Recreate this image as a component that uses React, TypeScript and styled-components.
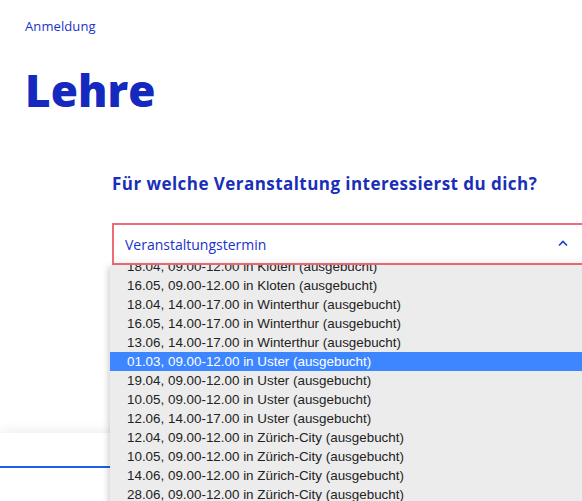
import React from 'react';
import styled, { createGlobalStyle } from 'styled-components';

const options = [
  '18.04, 09.00-12.00 in Kloten (ausgebucht)',
  '16.05, 09.00-12.00 in Kloten (ausgebucht)',
  '18.04, 14.00-17.00 in Winterthur (ausgebucht)',
  '16.05, 14.00-17.00 in Winterthur (ausgebucht)',
  '13.06, 14.00-17.00 in Winterthur (ausgebucht)',
  '01.03, 09.00-12.00 in Uster (ausgebucht)',
  '19.04, 09.00-12.00 in Uster (ausgebucht)',
  '10.05, 09.00-12.00 in Uster (ausgebucht)',
  '12.06, 14.00-17.00 in Uster (ausgebucht)',
  '12.04, 09.00-12.00 in Zürich-City (ausgebucht)',
  '10.05, 09.00-12.00 in Zürich-City (ausgebucht)',
  '14.06, 09.00-12.00 in Zürich-City (ausgebucht)',
  '28.06, 09.00-12.00 in Zürich-City (ausgebucht)',
];

const selectedIndex = 5;

const GlobalStyle = createGlobalStyle`
  html, body {
    margin: 0;
    padding: 0;
    background: #fff;
  }
  body {
    font-family: 'Open Sans', 'Liberation Sans', sans-serif;
  }
`;

const App = () => {
  return (
    <>
      <GlobalStyle />
      <Page>
        <Header>
          <NavLink href='#'>Anmeldung</NavLink>
        </Header>

        <Title>Lehre</Title>

        <Section>
          <Question>Für welche Veranstaltung interessierst du dich?</Question>

          <SelectWrap>
            <SelectBox>
              <SelectLabel>Veranstaltungstermin</SelectLabel>
              <Chevron width='10' height='7' viewBox='0 0 10 7'>
                <path d='M1 5.5 L5 1.5 L9 5.5' fill='none' stroke='#1a3cd0' strokeWidth='1.6' />
              </Chevron>
            </SelectBox>

            <Dropdown>
              <OptionList>
                {options.map((opt, i) => (
                  <Option key={i} $selected={i === selectedIndex}>
                    {opt}
                  </Option>
                ))}
              </OptionList>
            </Dropdown>
          </SelectWrap>
        </Section>

        <BottomBar>
          <ProgressLine />
        </BottomBar>
      </Page>
    </>
  );
};

const Page = styled.div`
  position: relative;
  display: flex;
  flex-direction: column;
  width: 582px;
  height: 501px;
  overflow: hidden;
`;

const Header = styled.div`
  padding: 14px 25px 0;
  height: 16px;
`;

const NavLink = styled.a`
  font-size: 13px;
  line-height: 16px;
  color: #1a33c8;
  text-decoration: none;
  letter-spacing: 0.1px;
`;

const Title = styled.h1`
  margin: 36px 0 0 25px;
  font-size: 44px;
  line-height: 48px;
  font-weight: 800;
  color: #1629bf;
  letter-spacing: 0.1px;
`;

const Section = styled.div`
  position: relative;
  z-index: 2;
  padding-left: 112px;
  margin-top: 59px;
`;

const Question = styled.h2`
  margin: 0;
  font-size: 17px;
  line-height: 22px;
  font-weight: 700;
  color: #1a2fb8;
  letter-spacing: 0.45px;
`;

const SelectWrap = styled.div`
  position: relative;
  margin-top: 28px;
  margin-right: -12px;
`;

const SelectBox = styled.div`
  display: flex;
  align-items: center;
  justify-content: space-between;
  height: 38px;
  padding: 0 24px 0 11px;
  border: 2px solid #ee6b78;
  background: linear-gradient(#fff 80%, #f6f6f6);
`;

const SelectLabel = styled.span`
  font-size: 14px;
  color: #1a33c8;
`;

const Chevron = styled.svg`
  display: block;
  margin-top: -2px;
`;

const Dropdown = styled.div`
  position: absolute;
  top: 100%;
  left: -2px;
  right: 0;
  height: 260px;
  overflow: hidden;
  background: #ececec;
  box-shadow: -2px 2px 6px rgba(0, 0, 0, 0.18);
`;

const OptionList = styled.div`
  display: flex;
  flex-direction: column;
  margin-top: -8px;
`;

const Option = styled.div<{ $selected?: boolean }>`
  height: 19px;
  line-height: 19px;
  padding-left: 17px;
  font-family: 'Liberation Sans', Arial, sans-serif;
  font-size: 13.4px;
  white-space: nowrap;
  color: ${p => (p.$selected ? '#fff' : '#222')};
  background: ${p => (p.$selected ? '#3d86ff' : 'transparent')};
`;

const BottomBar = styled.div`
  margin-top: auto;
  height: 68px;
  padding-top: 33px;
  box-sizing: border-box;
  background: #fff;
  box-shadow: 0 -4px 10px rgba(0, 0, 0, 0.06);
`;

const ProgressLine = styled.div`
  height: 2px;
  width: 100%;
  background: #1f5cf2;
`;

export default App;
